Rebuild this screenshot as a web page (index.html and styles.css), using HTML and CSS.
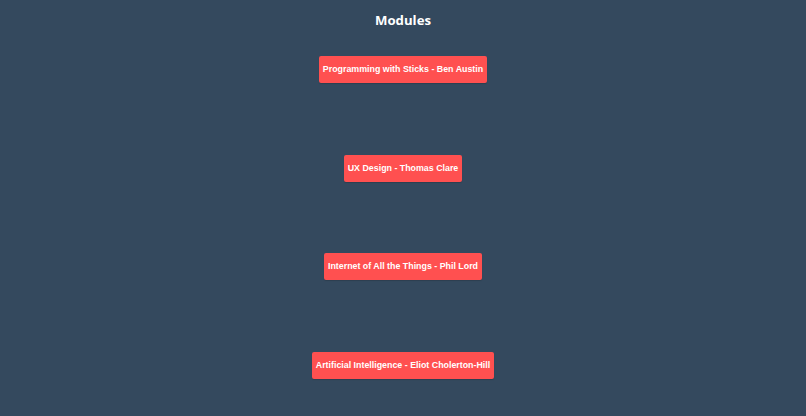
FILE: index.html
```html
<!DOCTYPE html>
<html>
<head>
<meta charset="utf-8">
<link rel="stylesheet" href="styles.css">
</head>
<body>
<h1 class="title">Modules</h1>
<div class="list">
  <button class="module">Programming with Sticks - Ben Austin</button>
  <button class="module">UX Design - Thomas Clare</button>
  <button class="module">Internet of All the Things - Phil Lord</button>
  <button class="module">Artificial Intelligence - Eliot Cholerton-Hill</button>
</div>
</body>
</html>
```
FILE: styles.css
```css
html, body {
  margin: 0;
  padding: 0;
  background: #34495e;
  height: 100%;
}
body {
  font-family: "Open Sans", sans-serif;
}
.title {
  margin: 0;
  padding-top: 10px;
  text-align: center;
  color: #ffffff;
  font-size: 13.2px;
  font-weight: 700;
  line-height: 20px;
}
.list {
  display: flex;
  flex-direction: column;
  align-items: center;
  gap: 71.67px;
  padding-top: 26px;
}
.module {
  background: #ff5050;
  color: #ffffff;
  border: none;
  border-radius: 2px;
  font-family: "Liberation Sans", Arial, sans-serif;
  font-weight: 700;
  font-size: 8.85px;
  line-height: 11px;
  height: 27px;
  padding: 0 4px;
  box-shadow: 0 1px 1px rgba(0,0,0,0.15);
}
```
